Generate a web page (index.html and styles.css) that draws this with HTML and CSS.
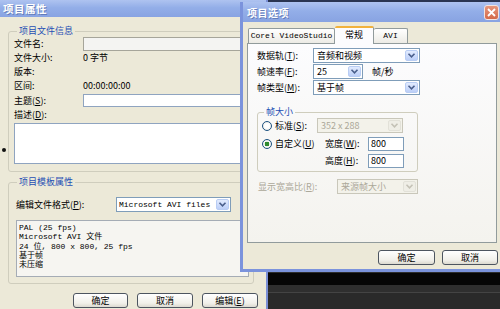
FILE: index.html
```html
<!DOCTYPE html>
<html>
<head>
<meta charset="utf-8">
<title>项目属性</title>
<link rel="stylesheet" href="styles.css">
</head>
<body>
<div class="desktop">
  <section class="win win-props">
    <header class="tb tb-props"><span class="tb-title">项目属性</span></header>
    <div class="props-body">
      <fieldset class="grp grp-info">
        <legend>项目文件信息</legend>
        <div class="row r14"><span class="lbl">文件名:</span><span class="inp inp-dis"></span></div>
        <div class="row r14"><span class="lbl">文件大小:</span><span class="val">0 字节</span></div>
        <div class="row r14"><span class="lbl">版本:</span></div>
        <div class="row r14"><span class="lbl">区间:</span><span class="val">00:00:00:00</span></div>
        <div class="row r15"><span class="lbl">主题(<u>S</u>):</span><span class="inp inp-s"></span></div>
        <div class="row r14"><span class="lbl">描述(<u>D</u>):</span></div>
        <div class="textarea"></div>
      </fieldset>
      <fieldset class="grp grp-tpl">
        <legend>项目模板属性</legend>
        <div class="row fmt-row">
          <span class="lbl lbl-fmt">编辑文件格式(<u>P</u>):</span>
          <div class="sel sel-fmt"><span class="sel-text mono">Microsoft AVI files</span><span class="sel-btn"><svg width="9" height="7" viewBox="0 0 9 7"><path d="M1.5 1.8 L4.5 4.8 L7.5 1.8" fill="none" stroke="#4a5f8c" stroke-width="1.6"/></svg></span></div>
        </div>
        <div class="infobox mono">PAL (25 fps)<br>Microsoft AVI 文件<br>24 位, 800 x 800, 25 fps<br>基于帧<br>未压缩</div>
      </fieldset>
      <div class="btns btns-props">
        <button class="btn b55">确定</button>
        <button class="btn b56">取消</button>
        <button class="btn b56">编辑(<u>E</u>)</button>
      </div>
    </div>
    <span class="dot"></span>
  </section>

  <section class="win win-opts">
    <header class="tb tb-opts">
      <span class="tb-title">项目选项</span>
      <span class="close"><svg width="9" height="9" viewBox="0 0 9 9"><path d="M1 1 L8 8 M8 1 L1 8" stroke="#fff" stroke-width="1.8"/></svg></span>
    </header>
    <div class="opts-body">
      <div class="tabs">
        <span class="tab tab-corel mono">Corel VideoStudio</span>
        <span class="tab tab-on">常规</span>
        <span class="tab tab-avi mono">AVI</span>
      </div>
      <div class="panel">
        <div class="prow first">
          <span class="plbl">数据轨(<u>T</u>):</span>
          <div class="sel sel-w107"><span class="sel-text">音频和视频</span><span class="sel-btn"><svg width="9" height="7" viewBox="0 0 9 7"><path d="M1.5 1.8 L4.5 4.8 L7.5 1.8" fill="none" stroke="#4a5f8c" stroke-width="1.6"/></svg></span></div>
        </div>
        <div class="prow">
          <span class="plbl">帧速率(<u>F</u>):</span>
          <div class="sel sel-w50"><span class="sel-text">25</span><span class="sel-btn"><svg width="9" height="7" viewBox="0 0 9 7"><path d="M1.5 1.8 L4.5 4.8 L7.5 1.8" fill="none" stroke="#4a5f8c" stroke-width="1.6"/></svg></span></div>
          <span class="unit">帧/秒</span>
        </div>
        <div class="prow">
          <span class="plbl">帧类型(<u>M</u>):</span>
          <div class="sel sel-w107"><span class="sel-text">基于帧</span><span class="sel-btn"><svg width="9" height="7" viewBox="0 0 9 7"><path d="M1.5 1.8 L4.5 4.8 L7.5 1.8" fill="none" stroke="#4a5f8c" stroke-width="1.6"/></svg></span></div>
        </div>
        <fieldset class="grp grp-size">
          <legend>帧大小</legend>
          <div class="srow s1">
            <span class="radio"></span><span class="rlbl">标准(<u>S</u>):</span>
            <div class="sel sel-dis sel-w86"><span class="sel-text">352 x 288</span><span class="sel-btn"><svg width="9" height="7" viewBox="0 0 9 7"><path d="M1.5 1.8 L4.5 4.8 L7.5 1.8" fill="none" stroke="#c4c2b6" stroke-width="1.6"/></svg></span></div>
          </div>
          <div class="srow s2">
            <span class="radio radio-on"></span><span class="rlbl">自定义(<u>U</u>)</span>
            <span class="dlbl dlbl-w">宽度(<u>W</u>):</span><span class="num">800</span>
          </div>
          <div class="srow s3">
            <span class="dlbl">高度(<u>H</u>):</span><span class="num">800</span>
          </div>
        </fieldset>
        <div class="prow aspect">
          <span class="alab">显示宽高比(<u>R</u>):</span>
          <div class="sel sel-dis sel-w81"><span class="sel-text">来源帧大小</span><span class="sel-btn"><svg width="9" height="7" viewBox="0 0 9 7"><path d="M1.5 1.8 L4.5 4.8 L7.5 1.8" fill="none" stroke="#c4c2b6" stroke-width="1.6"/></svg></span></div>
        </div>
      </div>
      <div class="btns btns-opts">
        <button class="btn b57">确定</button>
        <button class="btn b56">取消</button>
      </div>
    </div>
  </section>
</div>
</body>
</html>
```

FILE: styles.css
```css
* { box-sizing: border-box; }
html, body { margin: 0; padding: 0; }
body {
  width: 500px;
  height: 309px;
  overflow: hidden;
  font-family: "Noto Sans CJK SC", "Noto Sans", sans-serif;
  font-size: 9px;
  color: #000;
}
u { text-decoration: underline; }
.mono { font-family: "Liberation Mono", "Noto Sans CJK SC", monospace; }

.desktop {
  position: relative;
  width: 500px;
  height: 309px;
  overflow: hidden;
  background: linear-gradient(to bottom,
    #2a3552 0, #2a3552 2px,
    #2e2e2e 2px, #2e2e2e 273px,
    #060606 273px, #060606 285px,
    #2f2f2f 285px, #2f2f2f 292px,
    #444 292px, #444 293px,
    #2a2a2a 293px);
}

.win { position: absolute; background: #ECE9D8; }

/* title bars */
.tb {
  display: flex;
  align-items: center;
  justify-content: space-between;
  background: linear-gradient(to bottom, #aec3f0 0%, #93aee8 45%, #88a3e2 100%);
  color: #fff;
  font-weight: bold;
}
.tb-title { text-shadow: 1px 1px 0 rgba(50, 70, 130, 0.45); letter-spacing: 0.5px; }

/* ---------- left window ---------- */
.win-props {
  left: 0;
  top: 0;
  width: 268px;
  height: 330px;
  border-right: 2px solid #7a8fd6;
}
.tb-props { height: 17px; padding-left: 3px; font-size: 10.5px; }
.props-body { padding: 8px 12px 0 8px; }

fieldset.grp {
  margin: 0;
  min-width: 0;
  border: 1px solid #cfcdbd;
  border-radius: 3px;
}
.grp legend {
  padding: 0 2px;
  margin-left: 3px;
  color: #1f4fb4;
  font-size: 9px;
  line-height: 12px;
}
.grp-info { padding: 0 4px 7px 5px; }
.grp-tpl { margin-top: 4px !important; padding: 0 4px 6px 5px; }

.row { display: flex; align-items: center; }
.r14 { height: 14px; }
.r15 { height: 15px; }
.lbl { width: 69px; flex: none; line-height: 12px; }
.val { line-height: 12px; }
.inp {
  flex: 1;
  height: 14px;
  border: 1px solid #a6a59a;
  background: #f4f4f2;
}
.inp-s { height: 13px; background: #fff; border-color: #8fa4c0; }
.textarea {
  margin-top: 1px;
  height: 41px;
  border: 1px solid #8fa4c0;
  background: #fff;
}

.fmt-row { margin-top: 9px; height: 15px; }
.lbl-fmt { width: 100px; margin-left: 2px; }

.sel {
  display: flex;
  flex: none;
  height: 15px;
  border: 1px solid #7f9db9;
  background: #fff;
}
.sel-text { flex: 1; padding-left: 3px; line-height: 13px; white-space: nowrap; overflow: hidden; }
.sel-fmt { width: 115px; }
.sel-fmt .sel-text { font-size: 8px; padding-left: 2px; }
.sel-btn {
  width: 13px;
  margin: 1px;
  border: 1px solid #b9cdf4;
  border-radius: 2px;
  background: linear-gradient(to bottom, #e2ebfe, #bccff8);
  display: flex;
  align-items: center;
  justify-content: center;
}
.sel-dis { border-color: #c9c7ba; background: #f3f2ea; color: #aca899; }
.sel-dis .sel-btn { border-color: #e2e1d8; background: #efeee6; }

.infobox {
  margin: 8px 0 0 2px;
  height: 57px;
  border: 1px solid #a5acb5;
  background: #f6f5f1;
  padding: 2px 0 0 2px;
  font-size: 8px;
  line-height: 9.3px;
}

.btns { display: flex; justify-content: flex-end; }
.btns-props { margin: 9px -4px 0 0; gap: 9px; }
.btn {
  height: 15px;
  padding: 0;
  border: 1px solid #4d5560;
  border-radius: 3px;
  background: linear-gradient(to bottom, #ffffff, #f1f0ea 70%, #dcdad0);
  font-family: "Noto Sans CJK SC", "Noto Sans", sans-serif;
  font-size: 9px;
  line-height: 12px;
  color: #000;
}
.b55 { width: 55px; }
.b56 { width: 56px; }
.b57 { width: 57px; }

.dot {
  position: absolute;
  left: 2px;
  top: 148px;
  width: 4px;
  height: 4px;
  border-radius: 50%;
  background: #111;
}

/* ---------- right window ---------- */
.win-opts {
  left: 240px;
  top: 2px;
  width: 265px;
  height: 270px;
  border-left: 3px solid #7b93dc;
  border-bottom: 3px solid #7b93dc;
}
.tb-opts { height: 20px; padding-left: 4px; font-size: 10px; }
.close {
  width: 15px;
  height: 15px;
  margin-right: 6px;
  border: 1px solid #f2e4e0;
  border-radius: 3px;
  background: linear-gradient(to bottom, #e6967c, #d46a4a);
  display: flex;
  align-items: center;
  justify-content: center;
}
.opts-body { padding-top: 4px; }

.tabs { display: flex; align-items: flex-end; height: 17px; padding-left: 5px; }
.tab {
  height: 15px;
  border: 1px solid #919b9c;
  border-bottom: none;
  border-radius: 2px 2px 0 0;
  background: linear-gradient(to bottom, #ffffff, #ecebe5);
  line-height: 14px;
  text-align: center;
  font-size: 8px;
}
.tab-corel { width: 87px; }
.tab-avi { width: 34px; border-left: none; }
.tab-on {
  position: relative;
  z-index: 1;
  width: 39px;
  height: 18px;
  margin-bottom: -1px;
  border-left: none;
  border-top: 2px solid #f1b23c;
  background: #fcfcfe;
  font-size: 9px;
  line-height: 13px;
}

.panel {
  margin: 0 8px 0 4px;
  height: 200px;
  border: 1px solid #919b9c;
  background: linear-gradient(to bottom, #fcfcfe, #f4f3ee);
  padding-top: 4px;
}
.prow { display: flex; align-items: center; height: 15px; margin-top: 1px; padding-left: 9px; }
.prow.first { margin-top: 0; }
.plbl { width: 56px; flex: none; }
.sel-w107 { width: 107px; }
.sel-w50 { width: 50px; }
.sel-w86 { width: 86px; }
.sel-w81 { width: 81px; }
.unit { margin-left: 9px; }

.grp-size {
  margin: 11px 0 0 9px !important;
  width: 161px;
  padding: 0 2px 3px 4px;
}
.grp-size legend { margin-left: 2px; }
.srow { display: flex; align-items: center; height: 15px; }
.s2 { margin-top: 3px; }
.s3 { margin-top: 2px; padding-left: 63px; }
.radio {
  flex: none;
  width: 10px;
  height: 10px;
  border: 1px solid #1c5180;
  border-radius: 50%;
  background: radial-gradient(circle, #fff 40%, #e0ded4);
  margin-right: 3px;
}
.radio-on { background: radial-gradient(circle, #2f8a2f 0, #2f8a2f 2.2px, #fff 2.6px, #fff 45%, #e0ded4); }
.rlbl { width: 42px; flex: none; }
.dlbl { width: 43px; flex: none; }
.dlbl-w { margin-left: 8px; }
.num {
  width: 36px;
  height: 14px;
  border: 1px solid #7f9db9;
  background: #fff;
  padding-left: 2px;
  line-height: 12px;
}

.aspect { margin-top: 7px; padding-left: 10px; }
.alab { width: 79px; flex: none; color: #aca899; }

.btns-opts { margin: 7px 7px 0 0; gap: 7px; }
```
